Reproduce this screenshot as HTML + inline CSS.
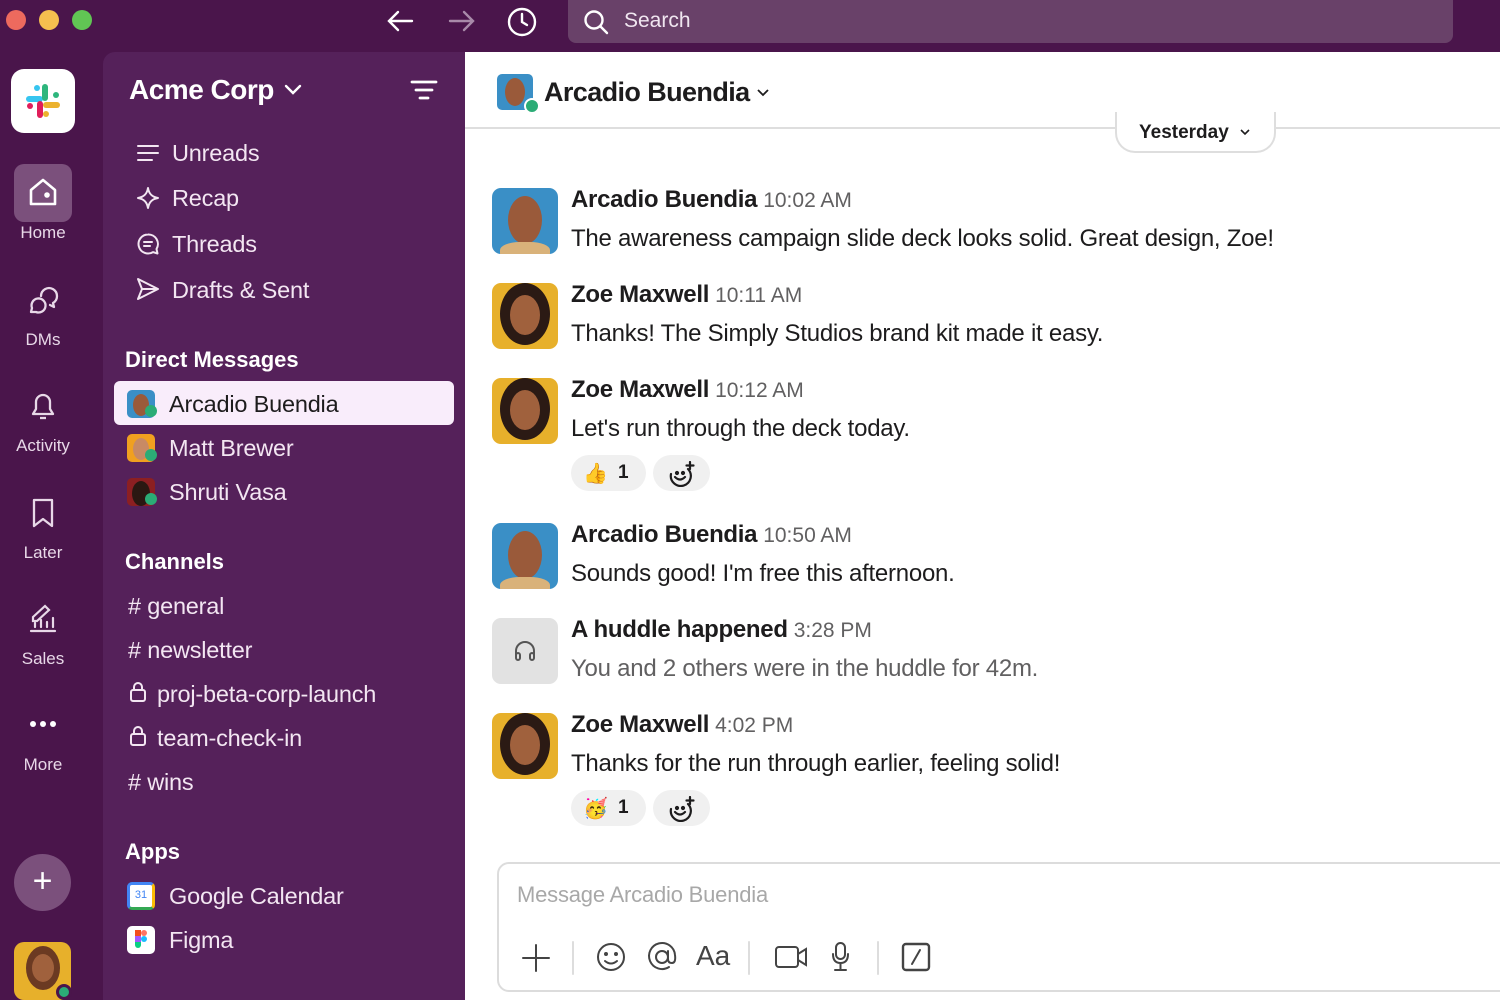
<!DOCTYPE html>
<html><head><meta charset="utf-8"><style>
*{margin:0;padding:0;box-sizing:border-box}
body{width:1500px;height:1000px;overflow:hidden;background:#4a154b;font-family:"Liberation Sans",sans-serif;position:relative}
.a{position:absolute}
.t{white-space:nowrap}
.side{left:103px;top:52px;width:362px;height:948px;background:#55215a;border-radius:12px 0 0 0}
.main{left:465px;top:52px;width:1035px;height:948px;background:#fff}
.si{color:#f3e6f2;font-size:23.5px;letter-spacing:-0.2px}
.hd{color:#fff;font-size:22px;font-weight:bold}
.rl{color:#e8d8e8;font-size:17px;text-align:center;width:86px;left:0}
.av{width:66px;height:66px;border-radius:9px;overflow:hidden}
.nm{font-size:24px;font-weight:bold;color:#1d1c1d;letter-spacing:-0.3px}
.tm{font-size:21px;color:#616061;font-weight:normal;margin-left:6px;letter-spacing:0}
.mt{font-size:24px;color:#1d1c1d;letter-spacing:-0.25px}
.rx{height:36px;border-radius:18px;background:#f0f0f0;font-size:19px;font-weight:bold;color:#1d1c1d}
</style></head><body>
<div class="a" style="left:6px;top:10px;width:20px;height:20px;border-radius:50%;background:#ed6a5e"></div>
<div class="a" style="left:39px;top:10px;width:20px;height:20px;border-radius:50%;background:#f5bf4f"></div>
<div class="a" style="left:72px;top:10px;width:20px;height:20px;border-radius:50%;background:#61c554"></div>
<svg class="a" style="left:386px;top:8px" width="30" height="26" viewBox="0 0 30 26" fill="none" stroke="#fff" stroke-width="2.4" stroke-linecap="round"><path d="M26 13H4M12 4L3 13l9 9"/></svg>
<svg class="a" style="left:446px;top:8px" width="30" height="26" viewBox="0 0 30 26" fill="none" stroke="#a88aa9" stroke-width="2.4" stroke-linecap="round"><path d="M4 13h22M18 4l9 9-9 9"/></svg>
<svg class="a" style="left:506px;top:6px" width="32" height="32" viewBox="0 0 32 32" fill="none" stroke="#fff" stroke-width="2.4" stroke-linecap="round"><circle cx="16" cy="16" r="13"/><path d="M16 8v8l5 3"/></svg>
<div class="a" style="left:568px;top:0;width:885px;height:43px;background:#694169;border-radius:0 0 8px 8px"></div>
<svg class="a" style="left:583px;top:9px" width="26" height="26" viewBox="0 0 26 26" fill="none" stroke="#fff" stroke-width="2.4" stroke-linecap="round"><circle cx="11" cy="11" r="8.5"/><path d="M17.5 17.5L24 24"/></svg>
<div class="a t" style="left:624px;top:9px;color:#f0e6f0;font-size:21px">Search</div>

<div class="a" style="left:11px;top:69px;width:64px;height:64px;background:#fff;border-radius:13px"></div>
<svg class="a" style="left:20px;top:78px" width="46" height="46" viewBox="0 0 46 46" stroke-linecap="round">
<path d="M9 21h11" stroke="#36c5f0" stroke-width="6"/><path d="M17 10v0" stroke="#36c5f0" stroke-width="6"/>
<path d="M25 9v11" stroke="#2eb67d" stroke-width="6"/><path d="M36 17h0" stroke="#2eb67d" stroke-width="6"/>
<path d="M26 27h11" stroke="#ecb22e" stroke-width="6"/><path d="M26 36h0" stroke="#ecb22e" stroke-width="6"/>
<path d="M20 26v11" stroke="#e01e5a" stroke-width="6"/><path d="M10 28h0" stroke="#e01e5a" stroke-width="6"/></svg>
<div class="a" style="left:14px;top:164px;width:58px;height:58px;background:#7b507c;border-radius:10px"></div>
<svg class="a" style="left:27px;top:176px" width="32" height="32" viewBox="0 0 32 32" fill="none" stroke="#fff" stroke-width="2.6" stroke-linejoin="round"><path d="M4 14L16 4l12 10v14H4z"/><circle cx="20" cy="19" r="1.5" fill="#fff"/></svg>
<div class="a rl t" style="top:223px">Home</div>
<svg class="a" style="left:27px;top:284px" width="32" height="32" viewBox="0 0 32 32" fill="none" stroke="#e8d8e8" stroke-width="2.3" stroke-linecap="round" stroke-linejoin="round"><path d="M14 12a8 8 0 1 1 12 7l1 4-4-2"/><path d="M4 28l1-4a7 7 0 1 1 4 4z"/></svg>
<div class="a rl t" style="top:330px">DMs</div>
<svg class="a" style="left:27px;top:390px" width="32" height="32" viewBox="0 0 32 32" fill="none" stroke="#e8d8e8" stroke-width="2.3" stroke-linejoin="round"><path d="M6 24h20l-3-5v-7a7 7 0 00-14 0v7z"/><path d="M13 28h6"/></svg>
<div class="a rl t" style="top:436px">Activity</div>
<svg class="a" style="left:29px;top:497px" width="28" height="32" viewBox="0 0 28 32" fill="none" stroke="#e8d8e8" stroke-width="2.3" stroke-linejoin="round"><path d="M5 3h18v26l-9-7-9 7z"/></svg>
<div class="a rl t" style="top:543px">Later</div>
<svg class="a" style="left:27px;top:603px" width="32" height="32" viewBox="0 0 32 32" fill="none" stroke="#e8d8e8" stroke-width="2.2" stroke-linecap="round"><path d="M4 28h24M8 24v-4M14 24v-7M20 24v-5M26 24v-9M6 14L18 3l4 4-12 11H6z"/></svg>
<div class="a rl t" style="top:649px">Sales</div>
<div class="a" style="left:30px;top:721px;width:6px;height:6px;border-radius:50%;background:#fff"></div>
<div class="a" style="left:40px;top:721px;width:6px;height:6px;border-radius:50%;background:#fff"></div>
<div class="a" style="left:50px;top:721px;width:6px;height:6px;border-radius:50%;background:#fff"></div>
<div class="a rl t" style="top:755px">More</div>
<div class="a" style="left:14px;top:854px;width:57px;height:57px;border-radius:50%;background:#7b507c;color:#fff;font-size:34px;text-align:center;line-height:55px">+</div>
<div class="a" style="left:14px;top:942px;width:57px;height:58px;border-radius:10px;background:#e7b02b;overflow:hidden"><div class="a" style="left:12px;top:4px;width:34px;height:44px;border-radius:50%;background:#6b3a22"></div><div class="a" style="left:18px;top:12px;width:22px;height:28px;border-radius:50%;background:#a0613d"></div></div>
<div class="a" style="left:56px;top:984px;width:16px;height:16px;border-radius:50%;background:#2bac76;border:3px solid #4a154b"></div>

<div class="a side"></div>
<div class="a t" style="left:129px;top:74px;color:#fff;font-size:28px;font-weight:bold;letter-spacing:-0.5px">Acme Corp</div>
<svg class="a" style="left:284px;top:83px" width="18" height="14" viewBox="0 0 18 14" fill="none" stroke="#fff" stroke-width="2.4" stroke-linecap="round"><path d="M2 3l7 7 7-7"/></svg>
<svg class="a" style="left:410px;top:79px" width="28" height="22" viewBox="0 0 28 22" fill="none" stroke="#fff" stroke-width="2.8" stroke-linecap="round"><path d="M2 3h24M6 11h16M10 19h8"/></svg>
<svg class="a" style="left:136px;top:142px" width="24" height="22" viewBox="0 0 24 22" fill="none" stroke="#f3e6f2" stroke-width="2" stroke-linecap="round"><path d="M2 4h20M2 11h20M2 18h14"/></svg>
<div class="a t si" style="left:172px;top:140px">Unreads</div>
<svg class="a" style="left:136px;top:186px" width="24" height="24" viewBox="0 0 24 24" fill="none" stroke="#f3e6f2" stroke-width="2" stroke-linejoin="round"><path d="M12 2c1 6 4 9 10 10-6 1-9 4-10 10-1-6-4-9-10-10 6-1 9-4 10-10z"/></svg>
<div class="a t si" style="left:172px;top:185px">Recap</div>
<svg class="a" style="left:136px;top:232px" width="24" height="24" viewBox="0 0 24 24" fill="none" stroke="#f3e6f2" stroke-width="2" stroke-linecap="round" stroke-linejoin="round"><path d="M12 2.5a9.5 9.5 0 1 0 5 17.6L21.5 21.5l-1-4.5A9.5 9.5 0 0 0 12 2.5z"/><path d="M8 10h8M8 14h6"/></svg>
<div class="a t si" style="left:172px;top:231px">Threads</div>
<svg class="a" style="left:136px;top:277px" width="24" height="24" viewBox="0 0 24 24" fill="none" stroke="#f3e6f2" stroke-width="2" stroke-linejoin="round"><path d="M2 2l20 10L2 22l4-10z M6 12h16"/></svg>
<div class="a t si" style="left:172px;top:277px">Drafts &amp; Sent</div>

<div class="a t hd" style="left:125px;top:347px">Direct Messages</div>
<div class="a" style="left:114px;top:381px;width:340px;height:44px;background:#f9edfb;border-radius:6px"></div>
<div class="a" style="left:127px;top:390px;width:28px;height:28px;border-radius:5px;background:#3a8fc6;overflow:hidden"><div class="a" style="left:6px;top:4px;width:16px;height:22px;border-radius:50%;background:#9a5a3a"></div></div>
<div class="a" style="left:145px;top:405px;width:12px;height:12px;border-radius:50%;background:#2bac76"></div>
<div class="a t" style="left:169px;top:391px;color:#1d1c1d;font-size:23.5px;letter-spacing:-0.2px">Arcadio Buendia</div>
<div class="a" style="left:127px;top:434px;width:28px;height:28px;border-radius:5px;background:#f0a020;overflow:hidden"><div class="a" style="left:6px;top:4px;width:16px;height:22px;border-radius:50%;background:#c88a64"></div></div>
<div class="a" style="left:145px;top:449px;width:12px;height:12px;border-radius:50%;background:#2bac76"></div>
<div class="a t si" style="left:169px;top:435px">Matt Brewer</div>
<div class="a" style="left:127px;top:478px;width:28px;height:28px;border-radius:5px;background:#8c1f22;overflow:hidden"><div class="a" style="left:5px;top:3px;width:18px;height:25px;border-radius:50%;background:#2a1812"></div></div>
<div class="a" style="left:145px;top:493px;width:12px;height:12px;border-radius:50%;background:#2bac76"></div>
<div class="a t si" style="left:169px;top:479px">Shruti Vasa</div>

<div class="a t hd" style="left:125px;top:549px">Channels</div>
<div class="a t si" style="left:128px;top:593px"># general</div>
<div class="a t si" style="left:128px;top:637px"># newsletter</div>
<svg class="a" style="left:129px;top:681px" width="18" height="22" viewBox="0 0 18 22" fill="none" stroke="#f3e6f2" stroke-width="2"><rect x="2" y="9" width="14" height="11" rx="2"/><path d="M5 9V6a4 4 0 018 0v3"/></svg>
<div class="a t si" style="left:157px;top:681px">proj-beta-corp-launch</div>
<svg class="a" style="left:129px;top:725px" width="18" height="22" viewBox="0 0 18 22" fill="none" stroke="#f3e6f2" stroke-width="2"><rect x="2" y="9" width="14" height="11" rx="2"/><path d="M5 9V6a4 4 0 018 0v3"/></svg>
<div class="a t si" style="left:157px;top:725px">team-check-in</div>
<div class="a t si" style="left:128px;top:769px"># wins</div>

<div class="a t hd" style="left:125px;top:839px">Apps</div>
<div class="a" style="left:127px;top:882px;width:28px;height:28px;border-radius:5px;background:#fff;border:3px solid #4285f4;border-right-color:#fbbc04;border-bottom-color:#34a853"><div style="font-size:11px;color:#4285f4;text-align:center;line-height:20px">31</div></div>
<div class="a t si" style="left:169px;top:883px">Google Calendar</div>
<div class="a" style="left:127px;top:926px;width:28px;height:28px;border-radius:5px;background:#fff"><div class="a" style="left:8px;top:4px;width:6px;height:6px;background:#f24e1e"></div><div class="a" style="left:14px;top:4px;width:6px;height:6px;background:#ff7262;border-radius:50%"></div><div class="a" style="left:8px;top:10px;width:6px;height:6px;background:#a259ff"></div><div class="a" style="left:14px;top:10px;width:6px;height:6px;background:#1abcfe;border-radius:50%"></div><div class="a" style="left:8px;top:16px;width:6px;height:6px;background:#0acf83;border-radius:0 0 3px 3px"></div></div>
<div class="a t si" style="left:169px;top:927px">Figma</div>

<div class="a main"></div>
<div class="a" style="left:497px;top:74px;width:36px;height:36px;border-radius:5px;background:#3a8fc6;overflow:hidden"><div class="a" style="left:8px;top:4px;width:20px;height:28px;border-radius:50%;background:#9a5a3a"></div></div>
<div class="a" style="left:524px;top:98px;width:16px;height:16px;border-radius:50%;background:#2bac76;border:2px solid #fff"></div>
<div class="a t" style="left:544px;top:77px;font-size:27px;font-weight:bold;color:#1d1c1d;letter-spacing:-0.6px">Arcadio Buendia</div>
<svg class="a" style="left:756px;top:88px" width="14" height="10" viewBox="0 0 14 10" fill="none" stroke="#1d1c1d" stroke-width="1.8"><path d="M2 2l5 5 5-5"/></svg>
<div class="a" style="left:465px;top:127px;width:1035px;height:2px;background:#dedede"></div>
<div class="a" style="left:1115px;top:112px;width:161px;height:41px;border:2px solid #dedede;border-top:none;border-radius:0 0 20px 20px;background:#fff;overflow:hidden"><div class="a t" style="left:22px;top:10px;font-size:19px;font-weight:bold;color:#1d1c1d">Yesterday</div><svg class="a" style="left:122px;top:16px" width="12" height="8" viewBox="0 0 12 8" fill="none" stroke="#1d1c1d" stroke-width="1.6"><path d="M2 2l4 4 4-4"/></svg></div>

<div class="a av" style="left:492px;top:188px;background:#3a8fc6"><div class="a" style="left:16px;top:8px;width:34px;height:48px;border-radius:50%;background:#9a5a3a"></div><div class="a" style="left:8px;top:54px;width:50px;height:20px;border-radius:40%;background:#d9b27a"></div></div>
<div class="a t nm" style="left:571px;top:186px">Arcadio Buendia<span class="tm">10:02 AM</span></div>
<div class="a t mt" style="left:571px;top:225px">The awareness campaign slide deck looks solid. Great design, Zoe!</div>

<div class="a av" style="left:492px;top:283px;background:#e7b02b"><div class="a" style="left:8px;top:0;width:50px;height:62px;border-radius:50%;background:#2b1a14"></div><div class="a" style="left:18px;top:12px;width:30px;height:40px;border-radius:50%;background:#a0613d"></div></div>
<div class="a t nm" style="left:571px;top:281px">Zoe Maxwell<span class="tm">10:11 AM</span></div>
<div class="a t mt" style="left:571px;top:320px">Thanks! The Simply Studios brand kit made it easy.</div>

<div class="a av" style="left:492px;top:378px;background:#e7b02b"><div class="a" style="left:8px;top:0;width:50px;height:62px;border-radius:50%;background:#2b1a14"></div><div class="a" style="left:18px;top:12px;width:30px;height:40px;border-radius:50%;background:#a0613d"></div></div>
<div class="a t nm" style="left:571px;top:376px">Zoe Maxwell<span class="tm">10:12 AM</span></div>
<div class="a t mt" style="left:571px;top:415px">Let's run through the deck today.</div>
<div class="a rx" style="left:571px;top:455px;width:75px"><span class="a" style="left:12px;top:6px;font-size:20px">👍</span><span class="a" style="left:47px;top:7px">1</span></div>
<div class="a rx" style="left:653px;top:455px;width:57px"><svg class="a" style="left:15px;top:6px" width="28" height="26" viewBox="0 0 28 26" fill="none" stroke="#1d1c1d" stroke-width="2.2" stroke-linecap="round"><path d="M20 8a10 10 0 11-17 5"/><circle cx="9" cy="12" r="1" fill="#1d1c1d"/><circle cx="15" cy="12" r="1" fill="#1d1c1d"/><path d="M7 16q5 5 10 0M22 1v7M18.5 4.5h7"/></svg></div>

<div class="a av" style="left:492px;top:523px;background:#3a8fc6"><div class="a" style="left:16px;top:8px;width:34px;height:48px;border-radius:50%;background:#9a5a3a"></div><div class="a" style="left:8px;top:54px;width:50px;height:20px;border-radius:40%;background:#d9b27a"></div></div>
<div class="a t nm" style="left:571px;top:521px">Arcadio Buendia<span class="tm">10:50 AM</span></div>
<div class="a t mt" style="left:571px;top:560px">Sounds good! I'm free this afternoon.</div>

<div class="a av" style="left:492px;top:618px;background:#e2e2e2"><svg class="a" style="left:21px;top:21px" width="24" height="24" viewBox="0 0 24 24" fill="none" stroke="#555" stroke-width="2"><path d="M3 17v-5a9 9 0 0118 0v5"/><rect x="3" y="14" width="4" height="7" rx="2"/><rect x="17" y="14" width="4" height="7" rx="2"/></svg></div>
<div class="a t nm" style="left:571px;top:616px">A huddle happened<span class="tm">3:28 PM</span></div>
<div class="a t mt" style="left:571px;top:655px;color:#616061">You and 2 others were in the huddle for 42m.</div>

<div class="a av" style="left:492px;top:713px;background:#e7b02b"><div class="a" style="left:8px;top:0;width:50px;height:62px;border-radius:50%;background:#2b1a14"></div><div class="a" style="left:18px;top:12px;width:30px;height:40px;border-radius:50%;background:#a0613d"></div></div>
<div class="a t nm" style="left:571px;top:711px">Zoe Maxwell<span class="tm">4:02 PM</span></div>
<div class="a t mt" style="left:571px;top:750px">Thanks for the run through earlier, feeling solid!</div>
<div class="a rx" style="left:571px;top:790px;width:75px"><span class="a" style="left:12px;top:6px;font-size:20px">🥳</span><span class="a" style="left:47px;top:7px">1</span></div>
<div class="a rx" style="left:653px;top:790px;width:57px"><svg class="a" style="left:15px;top:6px" width="28" height="26" viewBox="0 0 28 26" fill="none" stroke="#1d1c1d" stroke-width="2.2" stroke-linecap="round"><path d="M20 8a10 10 0 11-17 5"/><circle cx="9" cy="12" r="1" fill="#1d1c1d"/><circle cx="15" cy="12" r="1" fill="#1d1c1d"/><path d="M7 16q5 5 10 0M22 1v7M18.5 4.5h7"/></svg></div>

<div class="a" style="left:497px;top:862px;width:1020px;height:130px;border:2px solid #dcdcdc;border-radius:12px"></div>
<div class="a t" style="left:517px;top:882px;font-size:22px;color:#a8a8a8;letter-spacing:-0.2px">Message Arcadio Buendia</div>
<svg class="a" style="left:520px;top:940px;width:980px;height:36px" viewBox="0 0 980 36" fill="none" stroke="#444" stroke-width="2" stroke-linecap="round">
<path d="M16 5v26M3 18h26"/>
<path d="M53 2v32" stroke="#ddd"/>
<circle cx="91" cy="17" r="13"/><circle cx="86" cy="14" r="1" fill="#444"/><circle cx="96" cy="14" r="1" fill="#444"/><path d="M85 21q6 5 12 0"/>
<circle cx="142" cy="17" r="6"/><path d="M148 11v8q0 4 4 4t3-8a13 13 0 10-6 12"/>
<path d="M229 2v32" stroke="#ddd"/>
<rect x="256" y="7" width="22" height="20" rx="3"/><path d="M278 14l8-5v16l-8-5"/>
<rect x="316" y="3" width="9" height="16" rx="4.5"/><path d="M313 14q0 9 7.5 9t7.5-9M320.5 23v6M315 30h11"/>
<path d="M358 2v32" stroke="#ddd"/>
<rect x="383" y="4" width="26" height="26" rx="3" stroke-width="2.4"/><path d="M400 10l-8 14"/>
</svg>
<div class="a t" style="left:696px;top:940px;font-size:28px;color:#444">Aa</div>
</body></html>
